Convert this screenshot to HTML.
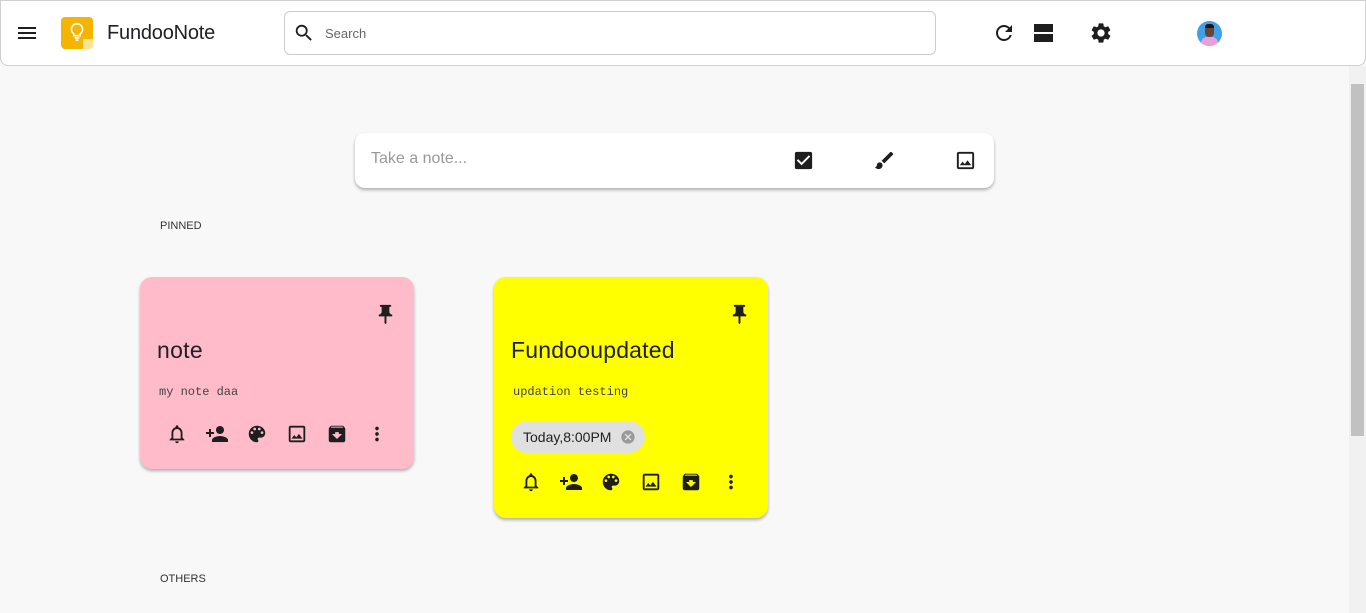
<!DOCTYPE html>
<html><head><meta charset="utf-8"><style>
*{box-sizing:border-box;margin:0;padding:0}
body{width:1366px;height:613px;overflow:hidden;background:#f8f8f8;font-family:"Liberation Sans",Arial,sans-serif;position:relative;color:#202124}
.a{position:absolute}
svg{display:block}
.hdr{left:0;top:0;width:1366px;height:66px;background:#fff;border:1px solid #d0d0d0;border-radius:0 0 8px 8px}
.card{border-radius:12px;box-shadow:0 2px 3px rgba(0,0,0,.3)}
.ic{fill:#1e1e1e}
.sb{right:0;top:66px;width:17px;height:547px;background:#f1f1f1}
</style></head><body>
<div class="a hdr"></div>
<svg class="a" style="left:15px;top:21px" width="24" height="24" viewBox="0 0 24 24"><path class="ic" d="M3 18h18v-2H3v2zm0-5h18v-2H3v2zm0-7v2h18V6H3z"/></svg>
<div class="a" style="left:61px;top:17px;width:32px;height:32px;background:#f5b400;border-radius:4px"></div>
<div class="a" style="left:83px;top:39px;width:10px;height:10px;background:#fbe39a;border-radius:0 0 4px 0"></div>
<svg class="a" style="left:66px;top:21px" width="22" height="22" viewBox="0 0 24 24"><path fill="none" stroke="#fff" stroke-width="1.8" d="M12 3a6 6 0 0 0-3.5 10.9V16h7v-2.1A6 6 0 0 0 12 3zM9.5 18.5h5M10.5 21h3"/></svg>
<div class="a" style="left:107px;top:22px;font-size:20px;color:#202124;letter-spacing:-0.2px">FundooNote</div>
<div class="a" style="left:284px;top:11px;width:652px;height:44px;border:1px solid #ccc;border-radius:6px;background:#fff"></div>
<svg class="a" style="left:293px;top:22px" width="22" height="22" viewBox="0 0 24 24"><path class="ic" d="M15.5 14h-.79l-.28-.27A6.47 6.47 0 0016 9.5 6.5 6.5 0 109.5 16c1.61 0 3.09-.59 4.23-1.57l.27.28v.79l5 4.99L20.49 19l-4.99-5zm-6 0C7.01 14 5 11.99 5 9.5S7.01 5 9.5 5 14 7.01 14 9.5 11.990 14 9.5 14z"/></svg>
<div class="a" style="left:325px;top:26px;font-size:13px;color:#666">Search</div>
<svg class="a" style="left:992px;top:21px" width="24" height="24" viewBox="0 0 24 24"><path class="ic" d="M17.65 6.35A7.958 7.958 0 0012 4c-4.42 0-7.99 3.58-7.99 8s3.57 8 7.99 8c3.73 0 6.84-2.55 7.73-6h-2.08A5.99 5.99 0 0112 18c-3.31 0-6-2.69-6-6s2.69-6 6-6c1.66 0 3.14.69 4.22 1.78L13 11h7V4l-2.35 2.35z"/></svg>
<div class="a" style="left:1034px;top:24px;width:19px;height:8px;background:#1e1e1e"></div>
<div class="a" style="left:1034px;top:34px;width:19px;height:8px;background:#1e1e1e"></div>
<svg class="a" style="left:1089px;top:21px" width="24" height="24" viewBox="0 0 24 24"><path class="ic" d="M19.14 12.94c.04-.3.06-.61.06-.94 0-.32-.02-.64-.07-.94l2.03-1.58a.49.49 0 00.12-.61l-1.92-3.32a.488.488 0 00-.59-.22l-2.39.96c-.5-.38-1.03-.7-1.62-.94l-.36-2.54a.484.484 0 00-.48-.41h-3.84c-.24 0-.43.17-.47.41l-.36 2.54c-.59.24-1.13.57-1.62.94l-2.39-.96c-.22-.08-.47 0-.59.22L2.74 8.870c-.12.21-.08.47.12.61l2.03 1.58c-.05.3-.09.63-.09.94s.02.64.07.94l-2.03 1.58a.49.49 0 00-.12.61l1.92 3.32c.12.22.37.29.59.22l2.39-.96c.5.38 1.03.7 1.62.94l.36 2.54c.05.24.24.41.48.41h3.84c.24 0 .44-.17.47-.41l.36-2.54c.59-.24 1.13-.56 1.62-.94l2.39.96c.22.08.47 0 .59-.22l1.92-3.32c.12-.22.07-.47-.12-.61l-2.01-1.58zM12 15.6c-1.98 0-3.6-1.62-3.6-3.6s1.62-3.6 3.6-3.6 3.6 1.62 3.6 3.6-1.62 3.6-3.6 3.6z"/></svg>
<div class="a" style="left:1197px;top:21px;width:25px;height:25px;border-radius:50%;background:#3fa0e8;overflow:hidden"><div class="a" style="left:4px;top:16px;width:17px;height:12px;border-radius:6px 6px 0 0;background:#e9a0d8"></div><div class="a" style="left:8px;top:4px;width:9px;height:12px;border-radius:4px;background:#6b4330"></div><div class="a" style="left:8px;top:3px;width:9px;height:4px;border-radius:3px 3px 0 0;background:#1e1410"></div></div>
<div class="a sb"><div class="a" style="left:2px;top:18px;width:13px;height:352px;background:#c1c1c1"></div></div>
<div class="a card" style="left:355px;top:133px;width:639px;height:55px;background:#fff;border-radius:10px"></div>
<div class="a" style="left:371px;top:150px;font-size:16px;color:#999">Take a note...</div>
<svg class="a" style="left:792px;top:149px" width="23" height="23" viewBox="0 0 24 24"><path class="ic" d="M19 3H5a2 2 0 00-2 2v14a2 2 0 002 2h14a2 2 0 002-2V5a2 2 0 00-2-2zm-9 14l-5-5 1.41-1.41L10 14.17l7.59-7.59L19 8l-9 9z"/></svg>
<svg class="a" style="left:873px;top:149px" width="23" height="23" viewBox="0 0 24 24"><path class="ic" d="M7 14c-1.66 0-3 1.34-3 3 0 1.31-1.16 2-2 2 .92 1.22 2.49 2 4 2 2.21 0 4-1.79 4-4 0-1.66-1.34-3-3-3zm13.71-9.37l-1.34-1.34a.996.996 0 00-1.41 0L9 12.25 11.75 15l8.96-8.96a.996.996 0 000-1.41z"/></svg>
<svg class="a" style="left:954px;top:149px" width="23" height="23" viewBox="0 0 24 24"><path class="ic" d="M19 5v14H5V5h14m0-2H5c-1.1 0-2 .9-2 2v14c0 1.1.9 2 2 2h14c1.1 0 2-.9 2-2V5c0-1.1-.9-2-2-2zm-4.86 8.86l-3 3.87L9 13.14 6 17h12l-3.86-5.14z"/></svg>
<div class="a" style="left:160px;top:220px;font-size:11px;color:#333">PINNED</div>
<div class="a" style="left:160px;top:573px;font-size:11px;color:#333">OTHERS</div>

<div class="a card" style="left:140px;top:277px;width:274px;height:192px;background:#ffbbc9"></div>
<div class="a card" style="left:494px;top:277px;width:274px;height:241px;background:#ffff00"></div>
<div class="a" style="left:157px;top:337px;font-size:23px;letter-spacing:0.3px">note</div>
<div class="a" style="left:159px;top:385px;font-size:12px;font-family:'Liberation Mono',monospace;color:#444">my note daa</div>
<div class="a" style="left:511px;top:337px;font-size:23px;letter-spacing:0.2px">Fundooupdated</div>
<div class="a" style="left:513px;top:385px;font-size:12px;font-family:'Liberation Mono',monospace;color:#444">updation testing</div>
<div class="a" style="left:511px;top:421px;width:134px;height:32px;border-radius:16px;background:#e0e0e0"></div>
<div class="a" style="left:523px;top:429px;font-size:14px;color:#222">Today,8:00PM</div>
<svg class="a" style="left:620px;top:429px" width="16" height="16" viewBox="0 0 24 24"><path fill="#999" d="M12 2C6.47 2 2 6.47 2 12s4.47 10 10 10 10-4.47 10-10S17.53 2 12 2zm5 13.59L15.59 17 12 13.41 8.41 17 7 15.59 10.59 12 7 8.41 8.41 7 12 10.59 15.59 7 17 8.41 13.41 12 17 15.59z"/></svg>

<svg width="0" height="0" style="position:absolute"><defs>
<path id="pin" d="M16 9V4h1c.55 0 1-.45 1-1s-.45-1-1-1H7c-.55 0-1 .45-1 1s.45 1 1 1h1v5c0 1.66-1.34 3-3 3v2h5.97v7l1 1 1-1v-7H19v-2c-1.66 0-3-1.34-3-3z"/>
<path id="bell" d="M12 22c1.1 0 2-.9 2-2h-4c0 1.1.89 2 2 2zm6-6v-5c0-3.07-1.64-5.64-4.5-6.32V4c0-.83-.67-1.5-1.5-1.5s-1.5.67-1.5 1.5v.68C7.630 5.36 6 7.92 6 11v5l-2 2v1h16v-1l-2-2zm-2 1H8v-6c0-2.48 1.51-4.5 4-4.5s4 2.02 4 4.5v6z"/>
<path id="padd" d="M15 12c2.21 0 4-1.79 4-4s-1.79-4-4-4-4 1.79-4 4 1.79 4 4 4zm-9-2V7H4v3H1v2h3v3h2v-3h3v-2H6zm9 4c-2.67 0-8 1.34-8 4v2h16v-2c0-2.66-5.33-4-8-4z"/>
<path id="pal" d="M12 3a9 9 0 000 18c.83 0 1.5-.67 1.5-1.5 0-.39-.15-.74-.39-1.01-.23-.26-.38-.61-.38-.99 0-.83.67-1.5 1.5-1.5H16c2.76 0 5-2.24 5-5 0-4.42-4.030-8-9-8zm-5.5 9c-.83 0-1.5-.67-1.5-1.5S5.67 9 6.5 9 8 9.67 8 10.5 7.33 12 6.5 12zm3-4C8.67 8 8 7.33 8 6.5S8.67 5 9.5 5s1.5.67 1.5 1.5S10.33 8 9.5 8zm5 0c-.83 0-1.5-.67-1.5-1.5S13.67 5 14.5 5s1.5.67 1.5 1.5S15.33 8 14.5 8zm3 4c-.83 0-1.5-.67-1.5-1.5S16.67 9 17.5 9s1.5.67 1.5 1.5-.67 1.5-1.5 1.5z"/>
<path id="img" d="M19 5v14H5V5h14m0-2H5c-1.1 0-2 .9-2 2v14c0 1.1.9 2 2 2h14c1.1 0 2-.9 2-2V5c0-1.1-.9-2-2-2zm-4.86 8.86l-3 3.87L9 13.14 6 17h12l-3.86-5.14z"/>
<path id="arc" d="M20.54 5.23l-1.39-1.68C18.880 3.21 18.47 3 18 3H6c-.47 0-.88.21-1.16.55L3.46 5.23C3.17 5.57 3 6.02 3 6.5V19c0 1.1.9 2 2 2h14c1.1 0 2-.9 2-2V6.5c0-.48-.17-.93-.46-1.27zM12 17.5L6.5 12H10v-2h4v2h3.5L12 17.5zM5.12 5l.81-1h12l.94 1H5.12z"/>
<path id="more" d="M12 8c1.1 0 2-.9 2-2s-.9-2-2-2-2 .9-2 2 .9 2 2 2zm0 2c-1.1 0-2 .9-2 2s.9 2 2 2 2-.9 2-2-.9-2-2-2zm0 6c-1.1 0-2 .9-2 2s.9 2 2 2 2-.9 2-2-.9-2-2-2z"/>
</defs></svg>

<svg class="a" style="left:374px;top:303px" width="23" height="23" viewBox="0 0 24 24"><use class="ic" href="#pin"/></svg>
<svg class="a" style="left:728px;top:303px" width="23" height="23" viewBox="0 0 24 24"><use class="ic" href="#pin"/></svg>

<svg class="a" style="left:166px;top:423px" width="22" height="22" viewBox="0 0 24 24"><use class="ic" href="#bell"/></svg>
<svg class="a" style="left:204px;top:422px" width="26" height="24" viewBox="0 0 24 24"><use class="ic" href="#padd"/></svg>
<svg class="a" style="left:246px;top:423px" width="22" height="22" viewBox="0 0 24 24"><use class="ic" href="#pal"/></svg>
<svg class="a" style="left:286px;top:423px" width="22" height="22" viewBox="0 0 24 24"><use class="ic" href="#img"/></svg>
<svg class="a" style="left:326px;top:423px" width="22" height="22" viewBox="0 0 24 24"><use class="ic" href="#arc"/></svg>
<svg class="a" style="left:366px;top:423px" width="22" height="22" viewBox="0 0 24 24"><use class="ic" href="#more"/></svg>

<svg class="a" style="left:520px;top:471px" width="22" height="22" viewBox="0 0 24 24"><use class="ic" href="#bell"/></svg>
<svg class="a" style="left:558px;top:470px" width="26" height="24" viewBox="0 0 24 24"><use class="ic" href="#padd"/></svg>
<svg class="a" style="left:600px;top:471px" width="22" height="22" viewBox="0 0 24 24"><use class="ic" href="#pal"/></svg>
<svg class="a" style="left:640px;top:471px" width="22" height="22" viewBox="0 0 24 24"><use class="ic" href="#img"/></svg>
<svg class="a" style="left:680px;top:471px" width="22" height="22" viewBox="0 0 24 24"><use class="ic" href="#arc"/></svg>
<svg class="a" style="left:720px;top:471px" width="22" height="22" viewBox="0 0 24 24"><use class="ic" href="#more"/></svg>
</body></html>
